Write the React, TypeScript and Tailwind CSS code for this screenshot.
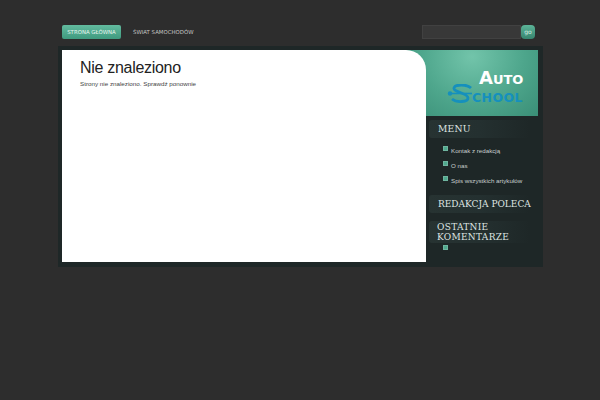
import React from 'react';

const serif = "font-['DejaVu_Serif',serif]";
const small = "font-['DejaVu_Sans',sans-serif]";
const body = "font-['Liberation_Sans',sans-serif]";
const heading = 'bg-gradient-to-r from-[#273332] via-[#243030] to-transparent rounded-[3px]';

const Bullet = () => (
  <span className="block w-[5px] h-[5px] bg-[#4fa98d] border border-[#6fb5a0] shrink-0" />
);

const menu = ['Kontak z redakcją', 'O nas', 'Spis wszystkich artykułów'];

const App: React.FC = () => {
  return (
    <div className="w-[600px] h-[400px] bg-[#2d2d2d] overflow-hidden">
      {/* Top nav */}
      <div className="flex items-start justify-between w-[600px] pl-[62px] pr-[65px] pt-[25px] h-[46px]">
        <div className={`flex items-center text-[5.4px] uppercase ${small}`}>
          <a className="h-[14px] w-[59px] flex items-center justify-center rounded-[2px] bg-gradient-to-b from-[#62bb9f] to-[#3f9a7f] text-[#e4f4ee]">
            Strona główna
          </a>
          <a className="ml-[12px] text-[#c4c4c4]">Świat samochodów</a>
        </div>
        <div className="flex items-center">
          <input className="w-[99px] h-[14px] bg-[#383838] border border-[#414141] outline-none" />
          <button className={`w-[14px] h-[14px] rounded-[4px] bg-gradient-to-b from-[#5cb498] to-[#37856f] text-[6px] leading-none text-[#d8efe7] ${small}`}>
            go
          </button>
        </div>
      </div>

      {/* Main frame */}
      <div className="ml-[58px] w-[485px] h-[221px] bg-[#1e2727] pl-[4px] pt-[4px]">
        <div className="flex h-[212px]">
          <div className="relative z-10 w-[364px] bg-white rounded-tr-[20px] pl-[18px] pt-[8px]">
            <h1 className={`${body} text-[16px] tracking-[-0.3px] leading-[19px] text-[#222222]`}>
              Nie znaleziono
            </h1>
            <p className={`mt-[3px] text-[6.25px] leading-[8px] text-[#444444] ${body}`}>
              Strony nie znaleziono. Sprawdź ponownie
            </p>
          </div>

          <div className="w-[112px]">
            {/* Logo, runs behind the rounded corner of the white panel */}
            <div className="relative -ml-[20px] w-[132px] h-[66px] bg-[radial-gradient(ellipse_at_50%_10%,#72c4aa_0%,#4ea68c_55%,#3a8f77_100%)] overflow-hidden">
              <span className={`absolute left-[73px] top-[18px] font-bold text-white text-[18px] leading-[20px] ${small}`}>
                A<span className="text-[13px]">UTO</span>
              </span>
              <span className={`absolute left-[66px] top-[41px] font-bold text-[#1590bd] text-[12.5px] leading-[14px] tracking-[0.4px] ${small}`}>
                CHOOL
              </span>
              <svg className="absolute left-[41px] top-[34px]" width="28" height="19" viewBox="0 0 28 19" fill="none">
                <path d="M24 4C20 0 8 0 7 4c-1 4 14 5 14 10 0 4-11 5-16 1" stroke="#1590bd" strokeWidth="2.8" />
                <path d="M1 9.5h24" stroke="#1590bd" strokeWidth="1.6" />
                <circle cx="3" cy="9.5" r="2.2" fill="#1590bd" />
              </svg>
            </div>

            {/* Sidebar */}
            <div className={`pl-[3px] pr-[8px] pt-[4px] text-[#dfe5e3] ${serif}`}>
              <h3 className={`pl-[9px] py-[3px] text-[9.2px] leading-[12px] tracking-[0.2px] ${heading}`}>MENU</h3>
              <ul className={`mt-[8px] pl-[14px] ${body} text-[6.2px] text-[#c8d0ce]`}>
                {menu.map((m) => (
                  <li key={m} className="flex items-start h-[15px]">
                    <Bullet />
                    <span className="ml-[3px] mt-[1px] leading-[8px] whitespace-nowrap">{m}</span>
                  </li>
                ))}
              </ul>
              <h3 className={`mt-[4px] pl-[9px] py-[3px] text-[9px] leading-[12px] whitespace-nowrap ${heading}`}>REDAKCJA POLECA</h3>
              <h3 className={`mt-[8px] pl-[8px] py-[1px] text-[9px] leading-[10px] tracking-[0.3px] ${heading}`}>OSTATNIE<br />KOMENTARZE</h3>
              <div className="mt-[2px] ml-[14px]"><Bullet /></div>
            </div>
          </div>
        </div>
      </div>
    </div>
  );
};

export default App;
